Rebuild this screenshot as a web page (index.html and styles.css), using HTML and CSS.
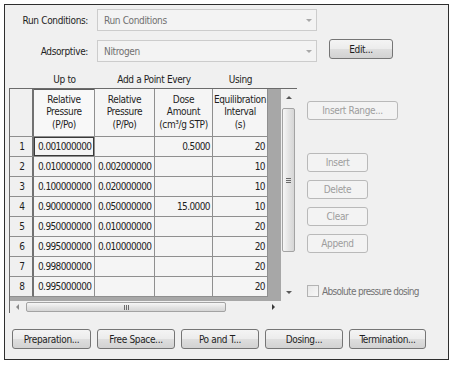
FILE: index.html
```html
<!DOCTYPE html>
<html>
<head>
<meta charset="utf-8">
<title>Run Conditions</title>
<link rel="stylesheet" href="styles.css">
</head>
<body>
<div class="dialog">
  <div class="field-row">
    <span class="lbl">Run Conditions:</span>
    <div class="combo"><span>Run Conditions</span><span class="tri-down light"></span></div>
  </div>
  <div class="field-row row2">
    <span class="lbl">Adsorptive:</span>
    <div class="combo"><span>Nitrogen</span><span class="tri-down light"></span></div>
    <button class="btn edit">Edit...</button>
  </div>
  <div class="col-heads">
    <span class="h-upto">Up to</span>
    <span class="h-add">Add a Point Every</span>
    <span class="h-using">Using</span>
  </div>
  <div class="main">
    <div class="grid">
      <div class="grid-top">
        <div class="table-area">
          <div class="trow thead">
            <div class="cell rn"></div>
            <div class="cell hc c1">Relative<br>Pressure<br>(P/Po)</div>
            <div class="cell hc">Relative<br>Pressure<br>(P/Po)</div>
            <div class="cell hc">Dose<br>Amount<br>(cm³/g STP)</div>
            <div class="cell hc">Equilibration<br>Interval<br>(s)</div>
          </div>
          <div class="trow"><div class="cell rn">1</div><div class="cell c1 num focus">0.001000000</div><div class="cell num"></div><div class="cell num r">0.5000</div><div class="cell num r">20</div></div>
          <div class="trow"><div class="cell rn">2</div><div class="cell c1 num">0.010000000</div><div class="cell num">0.002000000</div><div class="cell num r"></div><div class="cell num r">10</div></div>
          <div class="trow"><div class="cell rn">3</div><div class="cell c1 num">0.100000000</div><div class="cell num">0.020000000</div><div class="cell num r"></div><div class="cell num r">10</div></div>
          <div class="trow"><div class="cell rn">4</div><div class="cell c1 num">0.900000000</div><div class="cell num">0.050000000</div><div class="cell num r">15.0000</div><div class="cell num r">10</div></div>
          <div class="trow"><div class="cell rn">5</div><div class="cell c1 num">0.950000000</div><div class="cell num">0.010000000</div><div class="cell num r"></div><div class="cell num r">20</div></div>
          <div class="trow"><div class="cell rn">6</div><div class="cell c1 num">0.995000000</div><div class="cell num">0.010000000</div><div class="cell num r"></div><div class="cell num r">20</div></div>
          <div class="trow"><div class="cell rn">7</div><div class="cell c1 num">0.998000000</div><div class="cell num"></div><div class="cell num r"></div><div class="cell num r">20</div></div>
          <div class="trow"><div class="cell rn">8</div><div class="cell c1 num">0.995000000</div><div class="cell num"></div><div class="cell num r"></div><div class="cell num r">20</div></div>
        </div>
        <div class="vscroll">
          <div class="arrow-box"><span class="tri-up"></span></div>
          <div class="vthumb"><span class="grip-h"></span><span class="grip-h"></span><span class="grip-h"></span></div>
          <div class="spacer"></div>
          <div class="arrow-box"><span class="tri-down"></span></div>
        </div>
      </div>
      <div class="hscroll">
        <div class="harrow"><span class="tri-left"></span></div>
        <div class="hthumb"><span class="grip-v"></span><span class="grip-v"></span><span class="grip-v"></span></div>
        <div class="spacer"></div>
        <div class="harrow"><span class="tri-right"></span></div>
      </div>
    </div>
    <div class="side">
      <button class="btn dis wide">Insert Range...</button>
      <button class="btn dis small first">Insert</button>
      <button class="btn dis small">Delete</button>
      <button class="btn dis small">Clear</button>
      <button class="btn dis small">Append</button>
      <div class="chk-row"><span class="chk"></span><span class="chk-lbl">Absolute pressure dosing</span></div>
    </div>
  </div>
  <div class="bottom">
    <button class="btn b1">Preparation...</button>
    <button class="btn b2">Free Space...</button>
    <button class="btn b3">Po and T...</button>
    <button class="btn b4">Dosing...</button>
    <button class="btn b5">Termination...</button>
  </div>
</div>
</body>
</html>
```

FILE: styles.css
```css
body {
  margin: 0;
  background: #ffffff;
  font-family: "DejaVu Sans Condensed", "DejaVu Sans", sans-serif;
  font-stretch: condensed;
  font-size: 10px;
  letter-spacing: -0.35px;
  color: #1e1e1e;
}

.dialog {
  margin: 4px 0 0 4px;
  width: 445px;
  height: 356px;
  box-sizing: border-box;
  border: 1px solid #2e2e2e;
  background: #f0f0f0;
  padding-top: 4px;
  display: flex;
  flex-direction: column;
}

.field-row {
  display: flex;
  align-items: center;
  height: 22px;
}

.row2 {
  margin-top: 9px;
}

.lbl {
  width: 83px;
  text-align: right;
  margin-right: 9px;
}

.combo {
  width: 220px;
  height: 22px;
  box-sizing: border-box;
  border: 1px solid #cccccc;
  background: #f3f3f3;
  color: #707070;
  display: flex;
  align-items: center;
  justify-content: space-between;
  padding: 0 4px 0 6px;
}

.tri-down,
.tri-up,
.tri-left,
.tri-right {
  display: block;
  width: 0;
  height: 0;
}

.tri-down {
  border-left: 3px solid transparent;
  border-right: 3px solid transparent;
  border-top: 3px solid #5a5a5a;
}

.tri-down.light {
  border-top-color: #a8a8a8;
}

.tri-up {
  border-left: 3px solid transparent;
  border-right: 3px solid transparent;
  border-bottom: 3px solid #5a5a5a;
}

.tri-left {
  border-top: 3px solid transparent;
  border-bottom: 3px solid transparent;
  border-right: 3px solid #8a8a8a;
}

.tri-right {
  border-top: 3px solid transparent;
  border-bottom: 3px solid transparent;
  border-left: 3px solid #3a3a3a;
}

.btn {
  font: inherit;
  letter-spacing: inherit;
  color: #1e1e1e;
  height: 20px;
  box-sizing: border-box;
  border: 1px solid #757575;
  border-radius: 3px;
  background: linear-gradient(#f4f4f4 0%, #ececec 48%, #dedede 52%, #d2d2d2 100%);
  padding: 0;
  margin: 0;
}

.btn.dis {
  border-color: #b9b9b9;
  background: #f3f3f3;
  color: #9d9d9d;
}

.edit {
  width: 64px;
  margin-left: 12px;
  align-self: flex-start;
  margin-top: -1px;
}

.col-heads {
  margin-top: 9px;
  height: 17px;
  display: flex;
  align-items: center;
  padding-left: 29px;
}

.col-heads span {
  text-align: center;
}

.h-upto { width: 61px; }
.h-add { width: 118px; }
.h-using { width: 55px; }

.main {
  display: flex;
  padding-left: 4px;
  height: 225px;
}

.grid {
  width: 288px;
  box-sizing: border-box;
  border-top: 1px solid #6b6b6b;
  border-left: 1px solid #6b6b6b;
  display: flex;
  flex-direction: column;
}

.grid-top {
  display: flex;
  height: 212px;
}

.table-area {
  width: 271px;
  background: #a7a7a7;
}

.trow {
  display: grid;
  grid-template-columns: 24px 61px 60px 58px 55px;
  height: 20px;
}

.trow.thead {
  height: 48px;
}

.cell {
  box-sizing: border-box;
  border-right: 1px solid #8f8f8f;
  border-bottom: 1px solid #8f8f8f;
  background: #f5f5f5;
  display: flex;
  align-items: center;
  white-space: nowrap;
  overflow: hidden;
}

.cell.rn {
  background: #f0f0f0;
  border-right: 2px solid #727272;
  justify-content: center;
  padding-left: 2px;
}

.cell.hc {
  justify-content: center;
  text-align: center;
  line-height: 12.5px;
  background: #f5f5f5;
}

.thead .cell.c1 {
  box-shadow: inset 0 1px 0 #5e5e5e;
  background: #f8f8f8;
}

.cell.num {
  padding: 0 3px 0 3px;
  letter-spacing: -0.6px;
}

.cell.c1.num {
  padding-left: 4px;
}

.cell.num.r {
  justify-content: flex-end;
  padding-right: 2px;
}

.cell.focus {
  box-shadow: inset 0 0 0 1px #3a3a3a;
}

.vscroll {
  width: 16px;
  background: #f0f0f0;
  display: flex;
  flex-direction: column;
}

.arrow-box {
  height: 17px;
  display: flex;
  align-items: center;
  justify-content: center;
}

.vthumb {
  margin: 2px 0 0 1px;
  width: 13px;
  height: 144px;
  box-sizing: border-box;
  border: 1px solid #a3a3a3;
  border-radius: 2px;
  background: linear-gradient(90deg, #f6f6f6, #e4e4e4 50%, #d6d6d6);
  display: flex;
  flex-direction: column;
  align-items: center;
  justify-content: center;
  gap: 1px;
}

.grip-h {
  display: block;
  width: 5px;
  height: 1px;
  background: #6a6a6a;
}

.spacer {
  flex: 1;
}

.hscroll {
  width: 271px;
  height: 12px;
  background: #f0f0f0;
  display: flex;
  align-items: center;
}

.harrow {
  width: 15px;
  height: 12px;
  display: flex;
  align-items: center;
  justify-content: center;
}

.hthumb {
  margin-left: 1px;
  width: 200px;
  height: 10px;
  box-sizing: border-box;
  border: 1px solid #a3a3a3;
  border-radius: 2px;
  background: linear-gradient(#f6f6f6, #e4e4e4 50%, #d6d6d6);
  display: flex;
  align-items: center;
  justify-content: center;
  gap: 1px;
}

.grip-v {
  display: block;
  width: 1px;
  height: 5px;
  background: #6a6a6a;
}

.side {
  margin-left: 10px;
  padding-top: 13px;
  display: flex;
  flex-direction: column;
  align-items: flex-start;
}

.wide {
  width: 91px;
  height: 19px;
}

.small {
  width: 61px;
  height: 19px;
  margin-top: 8px;
}

.small.first {
  margin-top: 33px;
}

.chk-row {
  margin-top: 32px;
  display: flex;
  align-items: center;
}

.chk {
  width: 12px;
  height: 12px;
  box-sizing: border-box;
  border: 1px solid #b3b3b3;
  background: linear-gradient(135deg, #e8e8e8, #f8f8f8);
}

.chk-lbl {
  margin-left: 3px;
  color: #737373;
  letter-spacing: -0.7px;
}

.bottom {
  margin-top: 16px;
  padding-left: 7px;
  display: flex;
  gap: 6px;
}

.b1 { width: 79px; }
.b2 { width: 78px; }
.b3 { width: 78px; }
.b4 { width: 78px; }
.b5 { width: 77px; }
```
